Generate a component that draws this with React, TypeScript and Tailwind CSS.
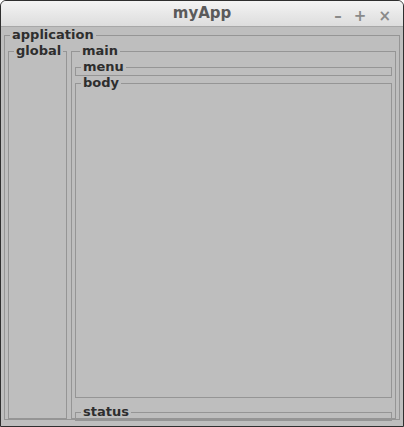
const font = { fontFamily: '"DejaVu Sans", sans-serif' };

const Legend = ({ children }: { children: string }) => (
  <legend className="ml-[5px] px-[2px] text-[13px] font-bold leading-[16px] text-[#2e2e2e]">{children}</legend>
);

export default function App() {
  return (
    <div style={font} className="flex h-[427px] w-[404px] flex-col overflow-hidden rounded-t-[6px] border border-[#2f2f2f] bg-[#bebebe]">
      <div className="relative flex h-[26px] shrink-0 items-center justify-center border-b border-[#a8a8a8] bg-gradient-to-b from-[#f4f4f4] to-[#dddddd]">
        <span className="text-[15px] font-bold text-[#5a5a5a]">myApp</span>
        <div className="absolute right-[12px] top-[4px] flex gap-[12px] text-[15px] font-bold text-[#8a8a8a]">
          <span>–</span>
          <span>+</span>
          <span>×</span>
        </div>
      </div>
      <fieldset className="mx-[3px] mb-[6px] flex min-h-0 flex-1 border border-[#959595]">
        <Legend>application</Legend>
        <div className="flex min-h-0 flex-1 gap-[4px] px-[3px] pb-0">
          <fieldset className="w-[59px] border border-[#959595]">
            <Legend>global</Legend>
          </fieldset>
          <fieldset className="flex min-h-0 flex-1 flex-col border border-[#959595] px-[3px]">
            <Legend>main</Legend>
            <fieldset className="h-[10px] border border-[#959595]">
              <Legend>menu</Legend>
            </fieldset>
            <fieldset className="mt-[6px] min-h-0 flex-1 border border-[#959595]">
              <Legend>body</Legend>
            </fieldset>
            <fieldset className="mb-[4px] mt-[6px] h-[10px] border border-[#959595]">
              <Legend>status</Legend>
            </fieldset>
          </fieldset>
        </div>
      </fieldset>
    </div>
  );
}
